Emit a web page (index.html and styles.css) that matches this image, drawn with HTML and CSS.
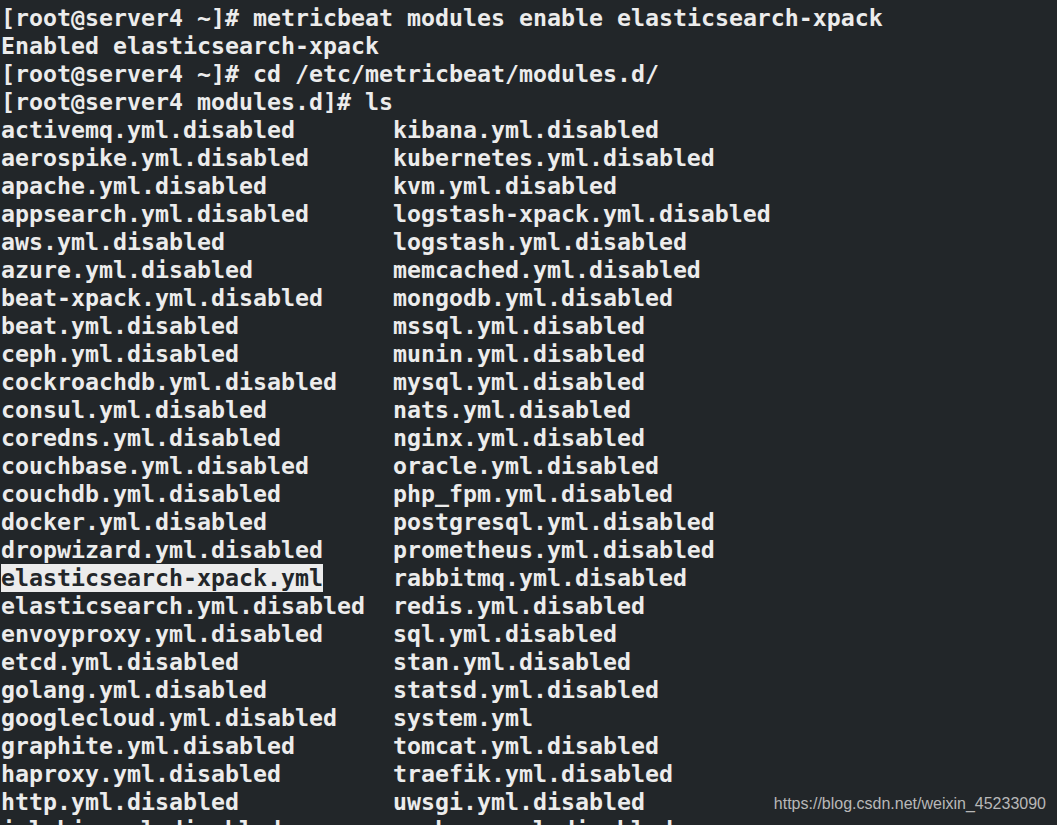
FILE: index.html
```html
<!DOCTYPE html>
<html lang="en">
<head>
<meta charset="utf-8">
<title>metricbeat modules</title>
<link rel="stylesheet" href="styles.css">
</head>
<body>
<main class="term">
  <div class="line">[root@server4 ~]# metricbeat modules enable elasticsearch-xpack</div>
  <div class="line">Enabled elasticsearch-xpack</div>
  <div class="line">[root@server4 ~]# cd /etc/metricbeat/modules.d/</div>
  <div class="line">[root@server4 modules.d]# ls</div>
  <div class="ls">
    <span>activemq.yml.disabled</span><span>kibana.yml.disabled</span>
    <span>aerospike.yml.disabled</span><span>kubernetes.yml.disabled</span>
    <span>apache.yml.disabled</span><span>kvm.yml.disabled</span>
    <span>appsearch.yml.disabled</span><span>logstash-xpack.yml.disabled</span>
    <span>aws.yml.disabled</span><span>logstash.yml.disabled</span>
    <span>azure.yml.disabled</span><span>memcached.yml.disabled</span>
    <span>beat-xpack.yml.disabled</span><span>mongodb.yml.disabled</span>
    <span>beat.yml.disabled</span><span>mssql.yml.disabled</span>
    <span>ceph.yml.disabled</span><span>munin.yml.disabled</span>
    <span>cockroachdb.yml.disabled</span><span>mysql.yml.disabled</span>
    <span>consul.yml.disabled</span><span>nats.yml.disabled</span>
    <span>coredns.yml.disabled</span><span>nginx.yml.disabled</span>
    <span>couchbase.yml.disabled</span><span>oracle.yml.disabled</span>
    <span>couchdb.yml.disabled</span><span>php_fpm.yml.disabled</span>
    <span>docker.yml.disabled</span><span>postgresql.yml.disabled</span>
    <span>dropwizard.yml.disabled</span><span>prometheus.yml.disabled</span>
    <span><span class="enabled">elasticsearch-xpack.yml</span></span><span>rabbitmq.yml.disabled</span>
    <span>elasticsearch.yml.disabled</span><span>redis.yml.disabled</span>
    <span>envoyproxy.yml.disabled</span><span>sql.yml.disabled</span>
    <span>etcd.yml.disabled</span><span>stan.yml.disabled</span>
    <span>golang.yml.disabled</span><span>statsd.yml.disabled</span>
    <span>googlecloud.yml.disabled</span><span>system.yml</span>
    <span>graphite.yml.disabled</span><span>tomcat.yml.disabled</span>
    <span>haproxy.yml.disabled</span><span>traefik.yml.disabled</span>
    <span>http.yml.disabled</span><span>uwsgi.yml.disabled</span>
    <span>jolokia.yml.disabled</span><span>vsphere.yml.disabled</span>
  </div>
</main>
<div class="watermark">https://blog.csdn.net/weixin_45233090</div>
</body>
</html>
```

FILE: styles.css
```css
html, body {
  margin: 0;
  padding: 0;
  background: #222629;
  height: 825px;
  overflow: hidden;
}

.term {
  padding: 4px 0 0 1px;
  font-family: "DejaVu Sans Mono", monospace;
  font-weight: bold;
  font-size: 23.25px;
  line-height: 28px;
  color: #ececec;
}

.line {
  height: 28px;
  white-space: pre;
}

.ls {
  display: grid;
  grid-template-columns: 28ch auto;
  grid-auto-rows: 28px;
  white-space: pre;
}

.enabled {
  display: inline-block;
  height: 28px;
  background: #ececec;
  color: #222629;
}

.watermark {
  position: absolute;
  right: 11px;
  top: 795px;
  font-family: "Liberation Sans", Arial, sans-serif;
  font-size: 16px;
  color: #b8b8b8;
}
```
